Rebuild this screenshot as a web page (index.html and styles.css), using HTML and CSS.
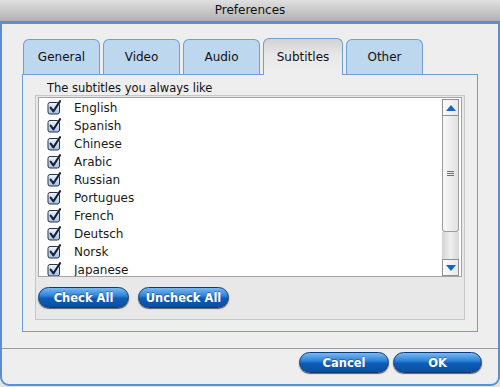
FILE: index.html
```html
<!DOCTYPE html>
<html lang="en">
<head>
  <meta charset="UTF-8">
  <title>Preferences</title>
  <link rel="stylesheet" href="styles.css">
</head>
<body>
  <svg width="0" height="0" class="defs">
    <defs>
      <linearGradient id="box-fill" x1="0" y1="0" x2="0" y2="1">
        <stop offset="0" stop-color="#eef5fd"/>
        <stop offset="1" stop-color="#9fc2ea"/>
      </linearGradient>
      <symbol id="check" viewBox="0 0 15 15">
        <rect x="1" y="2.5" width="11.5" height="11.5" rx="2" fill="url(#box-fill)" stroke="#2d3140" stroke-width="1"/>
        <path d="M3.6 7.6 L6.4 11.4 L13 1.2" fill="none" stroke="#1b2030" stroke-width="2.1" stroke-linecap="round" stroke-linejoin="round"/>
      </symbol>
    </defs>
  </svg>

  <div class="window">
    <div class="titlebar">Preferences</div>
    <div class="frame">
      <div class="content">
        <div class="tabs">
          <div class="tab">General</div>
          <div class="tab">Video</div>
          <div class="tab">Audio</div>
          <div class="tab active">Subtitles</div>
          <div class="tab">Other</div>
        </div>
        <div class="panel">
          <div class="group-title">The subtitles you always like</div>
          <div class="group">
            <div class="listbox">
              <ul class="list">
                <li><svg class="check"><use href="#check"/></svg>English</li>
                <li><svg class="check"><use href="#check"/></svg>Spanish</li>
                <li><svg class="check"><use href="#check"/></svg>Chinese</li>
                <li><svg class="check"><use href="#check"/></svg>Arabic</li>
                <li><svg class="check"><use href="#check"/></svg>Russian</li>
                <li><svg class="check"><use href="#check"/></svg>Portugues</li>
                <li><svg class="check"><use href="#check"/></svg>French</li>
                <li><svg class="check"><use href="#check"/></svg>Deutsch</li>
                <li><svg class="check"><use href="#check"/></svg>Norsk</li>
                <li><svg class="check"><use href="#check"/></svg>Japanese</li>
              </ul>
              <div class="scrollbar">
                <div class="sb-btn">
                  <svg width="10" height="6" viewBox="0 0 10 6"><polygon points="5,0 10,6 0,6" fill="#1763c6"/></svg>
                </div>
                <div class="sb-thumb"><span class="grip"></span></div>
                <div class="sb-track"></div>
                <div class="sb-btn">
                  <svg width="10" height="6" viewBox="0 0 10 6"><polygon points="0,0 10,0 5,6" fill="#1763c6"/></svg>
                </div>
              </div>
            </div>
            <div class="group-buttons">
              <button class="pill">Check All</button>
              <button class="pill">Uncheck All</button>
            </div>
          </div>
        </div>
      </div>
      <div class="separator"></div>
      <div class="footer">
        <button class="pill cancel">Cancel</button>
        <button class="pill ok">OK</button>
      </div>
    </div>
  </div>
</body>
</html>
```

FILE: styles.css
```css
* {
  margin: 0;
  padding: 0;
  box-sizing: border-box;
  font-family: "DejaVu Sans", Verdana, sans-serif;
}

body {
  background-color: #e4e4e4;
  width: 500px;
  height: 387px;
  overflow: hidden;
}

.defs {
  display: block;
  width: 0;
  height: 0;
}

.window {
  width: 500px;
  height: 386px;
  display: flex;
  flex-direction: column;
}

.titlebar {
  height: 22px;
  background: linear-gradient(#e0e0e0, #b2b2b2);
  border-bottom: 1px solid #858585;
  text-align: center;
  font-size: 12px;
  line-height: 21px;
  color: #111;
}

.frame {
  flex: 1;
  display: flex;
  flex-direction: column;
  background-color: #efeeee;
  border: 2px solid #5b8fd4;
  border-radius: 0 0 9px 9px;
}

.content {
  padding: 14px 20px 0;
}

/* tabs */
.tabs {
  display: flex;
  align-items: flex-end;
  gap: 3px;
  padding-left: 1px;
}

.tab {
  width: 77px;
  height: 35px;
  display: flex;
  align-items: center;
  justify-content: center;
  border: 1px solid #6f9fd8;
  border-bottom: none;
  border-radius: 6px 6px 0 0;
  background-color: #bdd7ef;
  font-size: 12px;
  color: #111;
}

.tab.active {
  width: 80px;
  height: 37px;
  margin-bottom: -1px;
  position: relative;
  z-index: 1;
  background: linear-gradient(#d2d2d2, #e9e8e8 45%, #efeeee);
}

.panel {
  height: 258px;
  border: 1px solid #6f9fd8;
  background-color: #efeeee;
  padding: 7px 12px 0;
}

.group-title {
  font-size: 11.5px;
  line-height: 13px;
  padding-left: 12px;
  color: #111;
}

.group {
  border: 1px solid #c6c6c6;
  background-color: #e8e8e8;
  padding: 1px 2px 11px;
}

/* list box */
.listbox {
  height: 180px;
  display: flex;
  border: 1px solid #a4a4a4;
  background-color: #fff;
}

.list {
  flex: 1;
  list-style-type: none;
  padding: 1px 0 0 8px;
  overflow: hidden;
}

.list li {
  height: 18px;
  display: flex;
  align-items: center;
  font-size: 12px;
  line-height: 14px;
  color: #1a1a1a;
}

.check {
  width: 15px;
  height: 15px;
  margin: -1px 12px 0 0;
  flex-shrink: 0;
}

.scrollbar {
  width: 17px;
  margin: 1px 2px 0 0;
  display: flex;
  flex-direction: column;
}

.sb-btn {
  height: 17px;
  display: flex;
  align-items: center;
  justify-content: center;
  border: 1px solid #8f8f8f;
  background: linear-gradient(90deg, #fcfcfc, #e8e8e8);
}

.sb-thumb {
  height: 116px;
  display: flex;
  align-items: center;
  justify-content: center;
  border: 1px solid #9d9d9d;
  border-top: none;
  border-radius: 0 0 3px 3px;
  background: linear-gradient(90deg, #f8f8f8, #e2e2e2);
}

.grip {
  width: 7px;
  height: 5px;
  background: repeating-linear-gradient(#707070 0 1px, transparent 1px 2px);
}

.sb-track {
  flex: 1;
  background: linear-gradient(90deg, #d2d2d2, #f0f0f0 50%, #d6d6d6);
}

/* buttons */
.group-buttons {
  display: flex;
  gap: 9px;
  margin-top: 10px;
}

.pill {
  width: 91px;
  height: 21px;
  border: 1px solid #0c3a78;
  border-radius: 11px;
  background: linear-gradient(#7ab8f0 0%, #2f84da 40%, #0d5db8 55%, #0a4fa0 100%);
  box-shadow: 0 1px 1px rgba(0, 0, 0, 0.6);
  color: #fff;
  font-size: 11.5px;
  font-weight: bold;
  text-shadow: 0 -1px 0 rgba(0, 0, 0, 0.3);
}

.separator {
  height: 1px;
  margin-top: 16px;
  background-color: #9c9c9c;
}

.footer {
  display: flex;
  justify-content: flex-end;
  gap: 4px;
  padding: 3px 16px 0 0;
}

.pill.cancel {
  width: 90px;
}

.pill.ok {
  width: 89px;
}
```
